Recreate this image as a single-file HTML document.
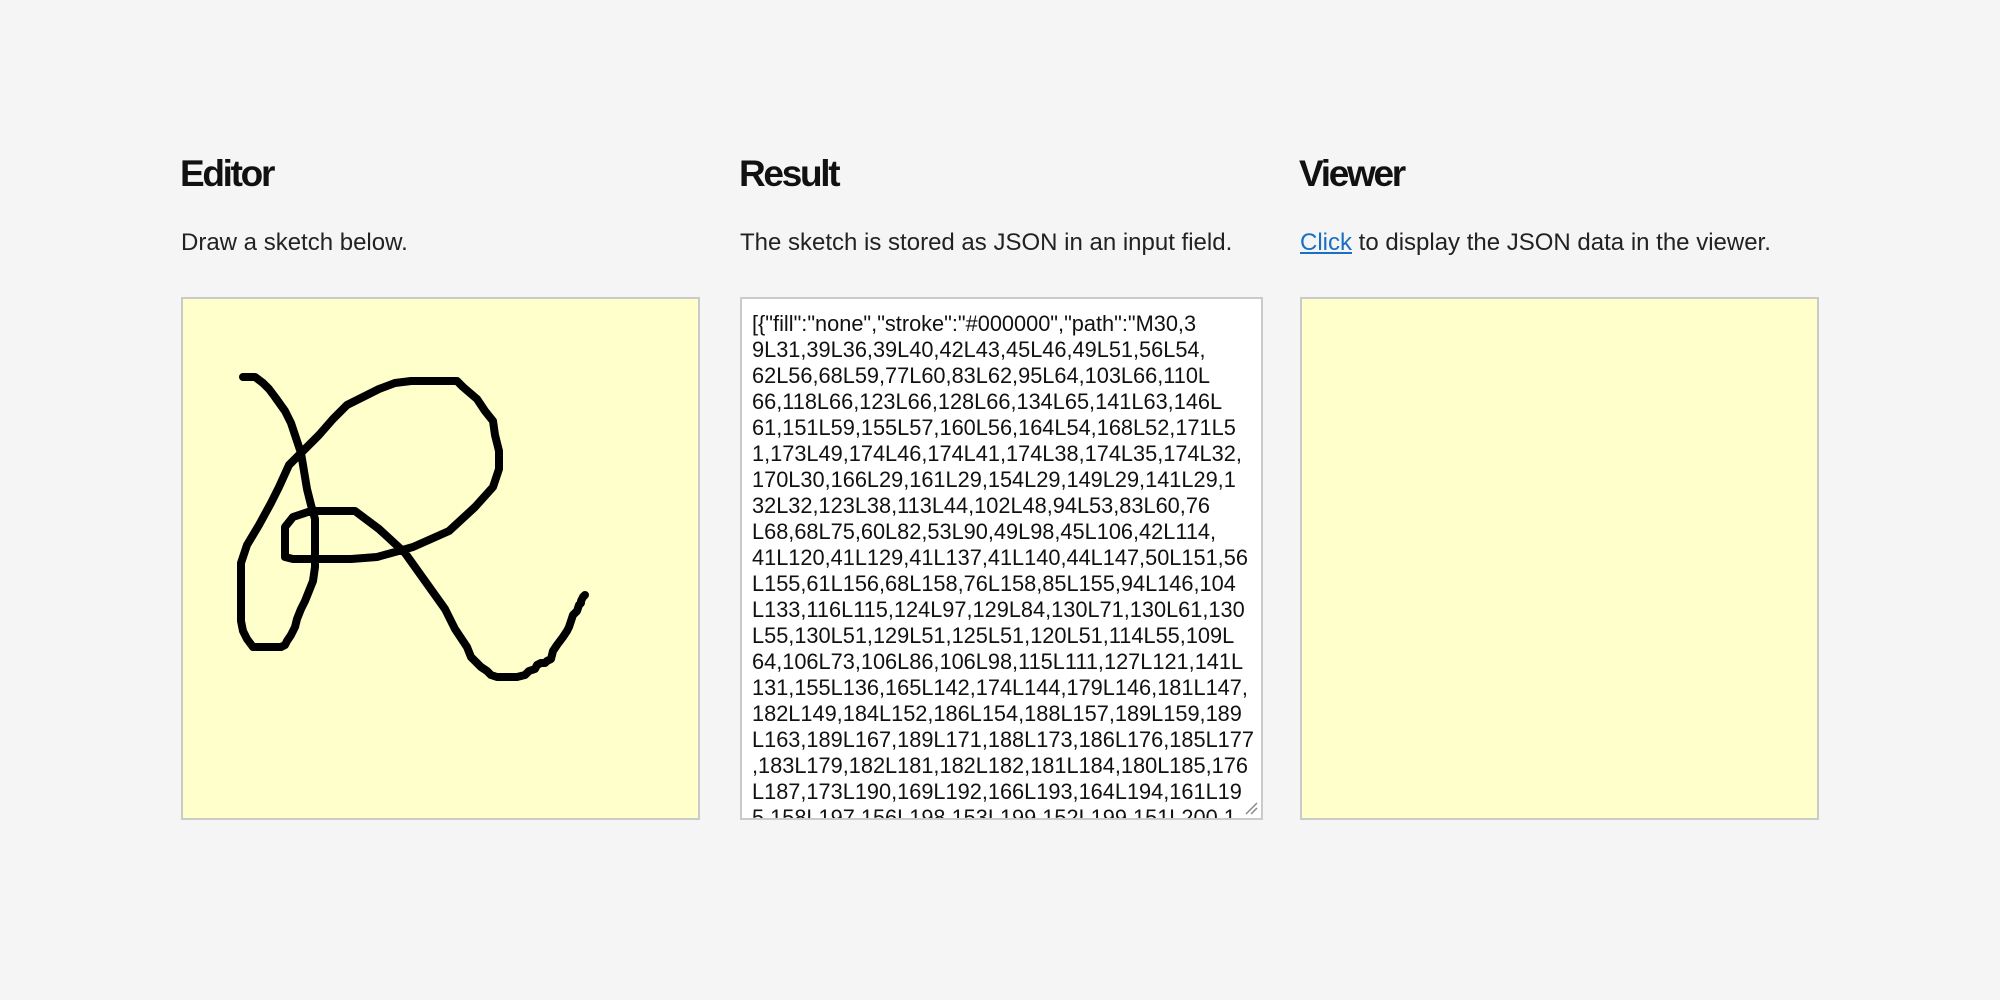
<!DOCTYPE html>
<html><head><meta charset="utf-8"><style>
html,body{margin:0;padding:0;background:#f5f5f5;width:2000px;height:1000px;overflow:hidden;font-family:"Liberation Sans",Helvetica,Arial,sans-serif;color:#1d1d1f}
h2{position:absolute;top:153px;margin:0;font-size:37px;font-weight:bold;letter-spacing:-2.3px;color:#111;white-space:nowrap}
p{position:absolute;top:229px;margin:0;font-size:24px;white-space:nowrap;color:#222}
a{color:#1a6fc4;text-decoration:underline}
.box{position:absolute;top:297px;width:515px;height:519px;border:2px solid #cacaca;background:#ffffcc}
.ta{position:absolute;top:297px;width:519px;height:519px;border:2px solid #cacaca;background:#fff;overflow:hidden}
.ta div{position:absolute;left:10px;top:12px;font-size:21.75px;line-height:26px;color:#111;white-space:nowrap}
</style></head><body>
<h2 style="left:180px">Editor</h2>
<p style="left:181px">Draw a sketch below.</p>
<div class="box" style="left:181px">
<svg width="515" height="519" viewBox="0 0 257.5 259.5" style="position:absolute;left:0;top:0">
<path fill="none" stroke="#000" stroke-width="4" stroke-linejoin="round" stroke-linecap="round" d="M30,39L31,39L36,39L40,42L43,45L46,49L51,56L54,62L56,68L59,77L60,83L62,95L64,103L66,110L66,118L66,123L66,128L66,134L65,141L63,146L61,151L59,155L57,160L56,164L54,168L52,171L51,173L49,174L46,174L41,174L38,174L35,174L32,170L30,166L29,161L29,154L29,149L29,141L29,132L32,123L38,113L44,102L48,94L53,83L60,76L68,68L75,60L82,53L90,49L98,45L106,42L114,41L120,41L129,41L137,41L140,44L147,50L151,56L155,61L156,68L158,76L158,85L155,94L146,104L133,116L115,124L97,129L84,130L71,130L61,130L55,130L51,129L51,125L51,120L51,114L55,109L64,106L73,106L86,106L98,115L111,127L121,141L131,155L136,165L142,174L144,179L146,181L147,182L149,184L152,186L154,188L157,189L159,189L163,189L167,189L171,188L173,186L176,185L177,183L179,182L181,182L182,181L184,180L185,176L187,173L190,169L192,166L193,164L194,161L195,158L197,156L198,153L199,152L199,151L200,149L201,148"/>
</svg></div>
<h2 style="left:180px;display:none"></h2>
<h2 style="left:739px">Result</h2>
<p style="left:740px">The sketch is stored as JSON in an input field.</p>
<div class="ta" style="left:740px"><div>[{"fill":"none","stroke":"#000000","path":"M30,3<br>9L31,39L36,39L40,42L43,45L46,49L51,56L54,<br>62L56,68L59,77L60,83L62,95L64,103L66,110L<br>66,118L66,123L66,128L66,134L65,141L63,146L<br>61,151L59,155L57,160L56,164L54,168L52,171L5<br>1,173L49,174L46,174L41,174L38,174L35,174L32,<br>170L30,166L29,161L29,154L29,149L29,141L29,1<br>32L32,123L38,113L44,102L48,94L53,83L60,76<br>L68,68L75,60L82,53L90,49L98,45L106,42L114,<br>41L120,41L129,41L137,41L140,44L147,50L151,56<br>L155,61L156,68L158,76L158,85L155,94L146,104<br>L133,116L115,124L97,129L84,130L71,130L61,130<br>L55,130L51,129L51,125L51,120L51,114L55,109L<br>64,106L73,106L86,106L98,115L111,127L121,141L<br>131,155L136,165L142,174L144,179L146,181L147,<br>182L149,184L152,186L154,188L157,189L159,189<br>L163,189L167,189L171,188L173,186L176,185L177<br>,183L179,182L181,182L182,181L184,180L185,176<br>L187,173L190,169L192,166L193,164L194,161L19<br>5,158L197,156L198,153L199,152L199,151L200,1</div>
<svg width="14" height="14" style="position:absolute;right:3px;bottom:3px"><path d="M2,13L13,2M7,13L13,7" stroke="#888" stroke-width="1.5"/></svg></div>
<h2 style="left:1299px">Viewer</h2>
<p style="left:1300px"><a>Click</a> to display the JSON data in the viewer.</p>
<div class="box" style="left:1300px"></div>
</body></html>
